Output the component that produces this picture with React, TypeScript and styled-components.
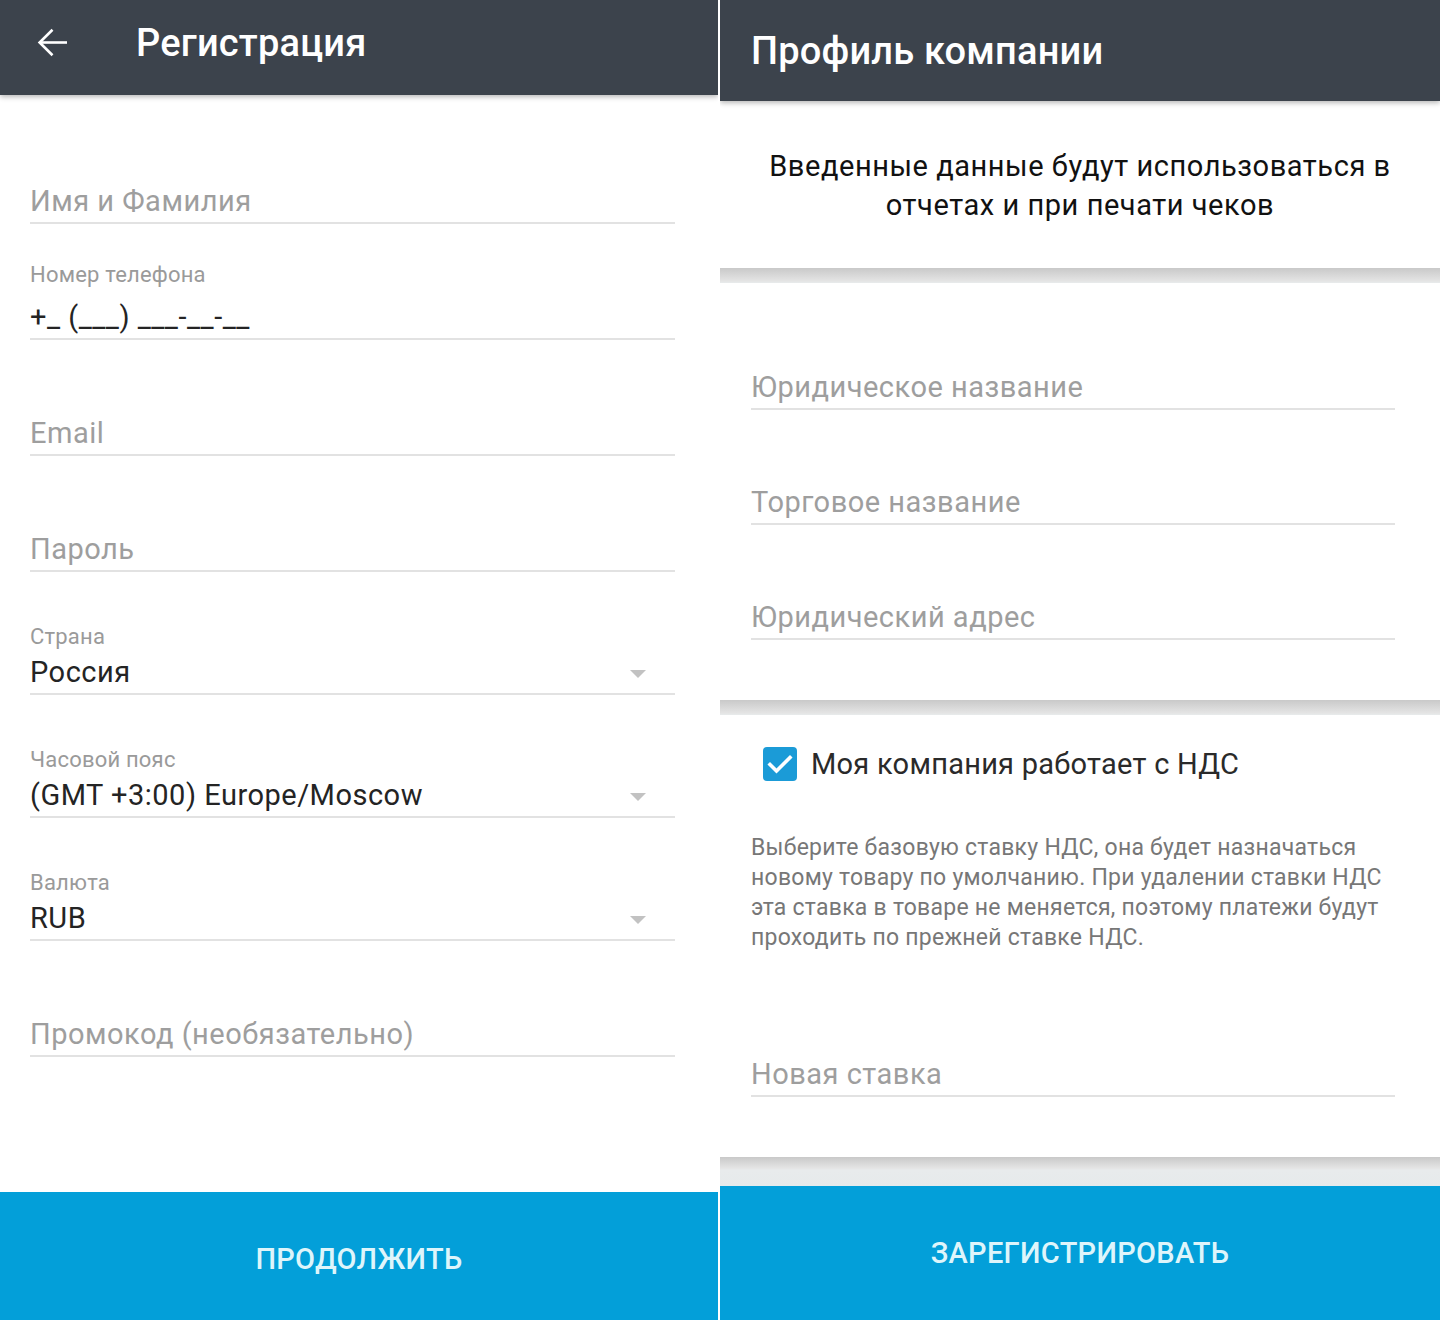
import React from "react";
import styled, { createGlobalStyle } from "styled-components";

const Global = createGlobalStyle`
  html, body { margin: 0; padding: 0; background: #ffffff; }
  body { font-family: Roboto, "Noto Sans", "Liberation Sans", sans-serif; -webkit-font-smoothing: antialiased; }
  * { box-sizing: border-box; }
`;

const Screens = styled.div`
  display: flex;
  gap: 2px;
  width: 1440px;
  height: 1320px;
  overflow: hidden;
  background: #ffffff;
`;

const Screen = styled.section<{ $w: number }>`
  position: relative;
  display: flex;
  flex-direction: column;
  width: ${(p) => p.$w}px;
  height: 1320px;
  background: #ffffff;
  overflow: hidden;
`;

const AppBar = styled.header<{ $h: number; $pl: number; $pb?: number }>`
  position: relative;
  z-index: 2;
  flex: none;
  display: flex;
  align-items: center;
  height: ${(p) => p.$h}px;
  padding: 0 0 ${(p) => p.$pb ?? 0}px ${(p) => p.$pl}px;
  background: #3c434c;
  box-shadow: 0 2px 5px rgba(0, 0, 0, 0.28);
`;

const BackButton = styled.button`
  display: flex;
  align-items: center;
  justify-content: center;
  width: 31px;
  height: 29px;
  padding: 0;
  border: 0;
  background: transparent;
  color: #ffffff;
  cursor: pointer;
`;

const Title = styled.h1<{ $size: number; $ml?: number }>`
  margin: 0 0 0 ${(p) => p.$ml ?? 0}px;
  font-size: ${(p) => p.$size}px;
  line-height: 1;
  font-weight: 500;
  color: #ffffff;
  letter-spacing: 0.2px;
`;

const Form = styled.div<{ $pt: number; $pb?: number; $pl: number; $pr: number }>`
  display: flex;
  flex-direction: column;
  padding: ${(p) => p.$pt}px ${(p) => p.$pr}px ${(p) => p.$pb ?? 0}px ${(p) => p.$pl}px;
`;

const Field = styled.div<{ $mt: number }>`
  display: flex;
  flex-direction: column;
  margin-top: ${(p) => p.$mt}px;
`;

const FieldLabel = styled.div<{ $gap: number }>`
  height: 26px;
  margin-bottom: ${(p) => p.$gap}px;
  font-size: 22px;
  line-height: 26px;
  letter-spacing: 0.2px;
  color: #9a9a9a;
  white-space: nowrap;
`;

const InputRow = styled.div`
  display: flex;
  align-items: flex-start;
  height: 41px;
  padding-bottom: 3px;
  border-bottom: 2px solid #e2e2e2;
`;

const InputText = styled.span<{ $placeholder?: boolean }>`
  font-size: 29px;
  line-height: 36px;
  letter-spacing: 0.5px;
  color: ${(p) => (p.$placeholder ? "#9e9e9e" : "#242424")};
  white-space: nowrap;
`;

const Caret = styled.span`
  flex: none;
  width: 0;
  height: 0;
  margin: 16px 29px 0 auto;
  border-left: 8.5px solid transparent;
  border-right: 8.5px solid transparent;
  border-top: 8.5px solid #c2c2c2;
`;

const Spacer = styled.div`
  flex: 1;
`;

const PrimaryButton = styled.button<{ $h: number; $pt?: number }>`
  flex: none;
  display: flex;
  align-items: center;
  justify-content: center;
  width: 100%;
  height: ${(p) => p.$h}px;
  padding: ${(p) => p.$pt ?? 0}px 0 0 0;
  border: 0;
  background: #039fd9;
  color: #def5fb;
  font-family: Roboto, "Noto Sans", sans-serif;
  font-size: 29px;
  font-weight: 500;
  letter-spacing: 0.3px;
  text-transform: uppercase;
  cursor: pointer;
`;

const Intro = styled.div`
  flex: none;
  height: 167px;
  padding: 46px 20px 0 20px;
  text-align: center;
  font-size: 29px;
  line-height: 38.5px;
  letter-spacing: 0.55px;
  color: #111111;
`;

const Band = styled.div<{ $h: number; $tail?: number }>`
  flex: none;
  height: ${(p) => p.$h}px;
  background: linear-gradient(
    to bottom,
    #c9c9c9 0px,
    #e4e4e4 ${(p) => p.$h - (p.$tail ?? 0) - 2}px,
    #e8ebec ${(p) => p.$h - (p.$tail ?? 0)}px,
    #e6eaeb 100%
  );
`;

const CheckRow = styled.label`
  display: flex;
  align-items: center;
  margin: 32px 0 0 43px;
  cursor: pointer;
`;

const CheckBox = styled.span`
  flex: none;
  display: flex;
  align-items: center;
  justify-content: center;
  width: 34px;
  height: 34px;
  border-radius: 4px;
  background: #1b9bd7;
`;

const CheckText = styled.span`
  margin-left: 14px;
  font-size: 29px;
  line-height: 34px;
  letter-spacing: 0.25px;
  color: #2a2a2a;
  white-space: nowrap;
`;

const Hint = styled.p`
  margin: 52px 30px 0 31px;
  font-size: 23px;
  line-height: 30px;
  letter-spacing: 0.25px;
  color: #777777;
  white-space: nowrap;
`;

const ArrowIcon = () => (
  <svg width="31" height="29" viewBox="0 0 31 29" fill="none">
    <path d="M30 14.5H3" stroke="#fff" strokeWidth="2.6" />
    <path d="M15.5 1.8L2.6 14.5L15.5 27.2" stroke="#fff" strokeWidth="2.6" strokeLinejoin="miter" />
  </svg>
);

const CheckIcon = () => (
  <svg width="34" height="34" viewBox="0 0 34 34" fill="none">
    <path d="M7 17.5L13.5 24L27 10.5" stroke="#fff" strokeWidth="3.6" strokeLinecap="square" />
  </svg>
);

type FieldSpec = {
  label?: string;
  value?: string;
  placeholder?: string;
  select?: boolean;
};

const TextField = ({ spec, mt, gap }: { spec: FieldSpec; mt: number; gap: number }) => (
  <Field $mt={mt}>
    <FieldLabel $gap={gap}>{spec.label ?? ""}</FieldLabel>
    <InputRow>
      {spec.value ? (
        <InputText>{spec.value}</InputText>
      ) : (
        <InputText $placeholder>{spec.placeholder}</InputText>
      )}
      {spec.select && <Caret />}
    </InputRow>
  </Field>
);

const RegistrationScreen = () => (
  <Screen $w={718}>
    <AppBar $h={95} $pl={37} $pb={10}>
      <BackButton aria-label="Назад">
        <ArrowIcon />
      </BackButton>
      <Title $size={38} $ml={68}>Регистрация</Title>
    </AppBar>
    <Form $pt={13} $pl={30} $pr={43}>
      <TextField mt={38} gap={11} spec={{ placeholder: "Имя и Фамилия" }} />
      <TextField mt={38} gap={11} spec={{ label: "Номер телефона", value: "+_ (___) ___-__-__" }} />
      <TextField mt={38} gap={11} spec={{ placeholder: "Email" }} />
      <TextField mt={38} gap={11} spec={{ placeholder: "Пароль" }} />
      <TextField mt={52} gap={4} spec={{ label: "Страна", value: "Россия", select: true }} />
      <TextField mt={52} gap={4} spec={{ label: "Часовой пояс", value: "(GMT +3:00) Europe/Moscow", select: true }} />
      <TextField mt={52} gap={4} spec={{ label: "Валюта", value: "RUB", select: true }} />
      <TextField mt={38} gap={11} spec={{ placeholder: "Промокод (необязательно)" }} />
    </Form>
    <Spacer />
    <PrimaryButton $h={128} $pt={6}>Продолжить</PrimaryButton>
  </Screen>
);

const CompanyScreen = () => (
  <Screen $w={720}>
    <AppBar $h={101} $pl={31}>
      <Title $size={38}>Профиль компании</Title>
    </AppBar>
    <Intro>
      Введенные данные будут использоваться в
      <br />
      отчетах и при печати чеков
    </Intro>
    <Band $h={15} />
    <Form $pt={12} $pb={60} $pl={31} $pr={45}>
      <TextField mt={37} gap={11} spec={{ placeholder: "Юридическое название" }} />
      <TextField mt={37} gap={11} spec={{ placeholder: "Торговое название" }} />
      <TextField mt={37} gap={11} spec={{ placeholder: "Юридический адрес" }} />
    </Form>
    <Band $h={15} />
    <CheckRow>
      <CheckBox>
        <CheckIcon />
      </CheckBox>
      <CheckText>Моя компания работает с НДС</CheckText>
    </CheckRow>
    <Hint>
      Выберите базовую ставку НДС, она будет назначаться
      <br />
      новому товару по умолчанию. При удалении ставки НДС
      <br />
      эта ставка в товаре не меняется, поэтому платежи будут
      <br />
      проходить по прежней ставке НДС.
    </Hint>
    <Form $pt={29} $pl={31} $pr={45}>
      <TextField mt={37} gap={11} spec={{ placeholder: "Новая ставка" }} />
    </Form>
    <Spacer />
    <Band $h={29} $tail={16} />
    <PrimaryButton $h={134}>Зарегистрировать</PrimaryButton>
  </Screen>
);

export default function App() {
  return (
    <>
      <Global />
      <Screens>
        <RegistrationScreen />
        <CompanyScreen />
      </Screens>
    </>
  );
}
